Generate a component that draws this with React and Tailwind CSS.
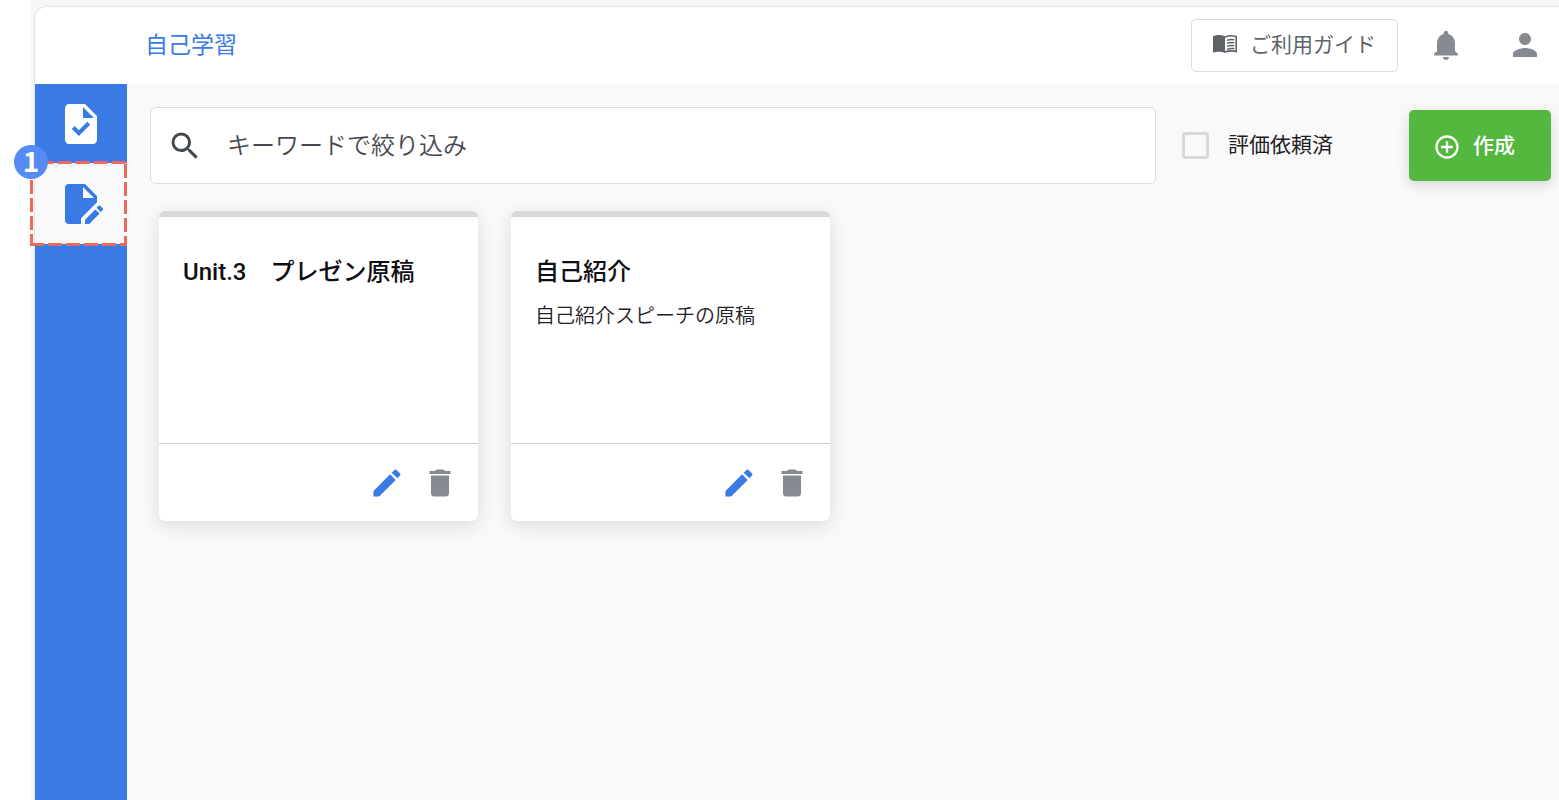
import {
  MdAddCircleOutline,
  MdDelete,
  MdEdit,
  MdNotifications,
  MdPerson,
  MdSearch,
  MdTask,
} from 'react-icons/md';

const cards = [
  { id: 1, title: 'Unit.3　プレゼン原稿', description: '' },
  { id: 2, title: '自己紹介', description: '自己紹介スピーチの原稿' },
];

function FileEditIcon() {
  return (
    <svg viewBox="0 0 24 24" fill="currentColor" className="size-12">
      <path fillRule="evenodd" d="M6 2a2 2 0 0 0-2 2v16a2 2 0 0 0 2 2h6v-2.9l8-8V8l-6-6H6zm7 1.5L18.5 9H13V3.5z" />
      <path d="M14 19.9V22h2.1l5.2-5.2-2.1-2.1-5.2 5.2z" />
      <path d="M21.2 12.7a.6.6 0 0 0-.42.17l-1 1 2.1 2.1 1-1c.2-.23.2-.58 0-.8l-1.3-1.3a.55.55 0 0 0-.38-.17z" />
    </svg>
  );
}

function BookIcon() {
  return (
    <svg viewBox="0 0 24 18" className="h-[18px] w-6">
      <path fill="currentColor" d="M0 1.3C1.8.4 3.8 0 6 0s4.4.5 6 1.5V18c-1.6-.9-3.7-1.3-5.9-1.3-2.200 0-4.200.3-6.100 1.100V1.300z" />
      <path fill="none" stroke="currentColor" strokeWidth="1.6" d="M12 2.2c1.700-.9 3.800-1.400 6-1.400 1.900 0 3.600.3 5.200 1v14.800c-1.600-.5-3.300-.7-5.200-.7-2.200 0-4.300.3-6 1.200" />
      <path fill="none" stroke="currentColor" strokeWidth="1.4" d="M14 5.300c2.300-.8 4.700-1 7.300-.6M14 8.300c2.300-.8 4.700-1 7.300-.6M14 11.300c2.300-.8 4.700-1 7.300-.6M14 14.300c2.300-.8 4.700-1 7.300-.6" />
    </svg>
  );
}

function StepMarker({ step }) {
  return (
    <div className="absolute -left-[5px] -top-[2px] w-[97px] h-[85px] pointer-events-none">
      <svg viewBox="0 0 97 85" fill="none" stroke="#ec6a5c" strokeWidth="3" strokeDasharray="14 4" className="size-full">
        <path d="M95.5 1.5H1.5" />
        <path d="M1.5 19V85" />
        <path d="M95.5 3V83" />
        <path d="M0 83.5H97" />
      </svg>
      <span className="absolute -left-4 -top-4 size-[34px] rounded-full bg-[#568bf5] text-white font-['Noto_Sans_CJK_JP',sans-serif] text-[28px] leading-[30px] font-bold text-center">{step}</span>
    </div>
  );
}

function Sidebar() {
  return (
    <nav className="w-[92px] shrink-0 bg-[#3a7ae4]">
      <a href="#tasks" aria-label="課題" className="flex h-[79px] items-center justify-center text-white">
        <MdTask className="size-12" />
      </a>
      <div className="relative">
        <a href="#self" aria-label="自己学習" className="flex h-[81px] items-center justify-center bg-[#f9f9f9] text-[#3a7ae4]">
          <FileEditIcon />
        </a>
        <StepMarker step={1} />
      </div>
    </nav>
  );
}

function Header() {
  return (
    <header className="flex h-[77px] items-center bg-white pl-[110px] pr-4 rounded-tl-xl">
      <h1 className="text-[23px] leading-8 text-[#3a7ae4]">自己学習</h1>
      <button className="ml-auto flex h-[53px] items-center gap-[13px] rounded-[5px] border border-[#dcdcdc] px-[21px] text-[21px] text-[#5f6368]">
        <span className="pb-1">
          <BookIcon />
        </span>
        ご利用ガイド
      </button>
      <button aria-label="お知らせ" className="ml-[30px] pb-0.5 text-[#878a90]">
        <MdNotifications className="size-9" />
      </button>
      <button aria-label="アカウント" className="ml-[43px] pb-0.5 text-[#878a90]">
        <MdPerson className="size-9" />
      </button>
    </header>
  );
}

function Toolbar() {
  return (
    <div className="flex items-center">
      <label className="flex h-[77px] flex-1 items-center gap-6 rounded-md border border-[#dcdcdc] bg-white pl-4 text-[#444950]">
        <MdSearch className="size-9 shrink-0" />
        <input
          type="text"
          aria-label="キーワードで絞り込み"
          placeholder="キーワードで絞り込み"
          className="w-full bg-transparent text-[24px] leading-9 font-[350] outline-none placeholder:text-[#444950]"
        />
      </label>
      <label className="ml-[26px] flex items-center gap-[19px] text-[21px] text-[#1f2024]">
        <input type="checkbox" className="size-[27px] appearance-none rounded-[3px] border-3 border-[#d9d9d9]" />
        評価依頼済
      </label>
      <button className="ml-[76px] flex h-[71px] items-center gap-3 rounded-[5px] bg-[#54b83e] pl-6 pr-9 pt-0.5 text-[21px] font-medium text-white shadow-[0_4px_14px_rgba(0,0,0,0.14)]">
        <MdAddCircleOutline className="size-7" />
        作成
      </button>
    </div>
  );
}

function Card({ title, description }) {
  return (
    <article className="flex h-[310px] w-[319px] flex-col rounded-md border-t-6 border-[#d9d9d9] bg-white shadow-[0_5px_18px_rgba(0,0,0,0.12)]">
      <div className="flex-1 px-6 pt-[35px]">
        <h2 className="text-[24px] leading-10 font-medium text-[#101014]">{title}</h2>
        <p className="mt-2 text-[20px] leading-8 font-[350] text-[#1f2024]">{description}</p>
      </div>
      <div className="flex h-[78px] items-center justify-end gap-[17px] border-t border-[#cfcfd6] pr-5">
        <button aria-label="編集" className="text-[#3a7ae4]">
          <MdEdit className="size-9" />
        </button>
        <button aria-label="削除" className="text-[#878a90]">
          <MdDelete className="size-9" />
        </button>
      </div>
    </article>
  );
}

export default function App() {
  return (
    <div className="min-h-screen bg-white pl-[31px] font-[Roboto,'Noto_Sans_CJK_JP',sans-serif]">
      <div className="flex min-h-screen flex-col bg-[#f7f7f7] pl-1 pt-[7px]">
        <div className="flex flex-1 flex-col rounded-tl-xl bg-[#f9f9f9] shadow-[0_0_2px_rgba(0,0,0,0.25)]">
          <Header />
          <div className="flex flex-1">
            <Sidebar />
            <main className="flex-1 pl-[23px] pr-2 pt-[23px]">
              <Toolbar />
              <div className="mt-[27px] flex flex-wrap gap-[33px] pl-[9px]">
                {cards.map((card) => (
                  <Card key={card.id} title={card.title} description={card.description} />
                ))}
              </div>
            </main>
          </div>
        </div>
      </div>
    </div>
  );
}
